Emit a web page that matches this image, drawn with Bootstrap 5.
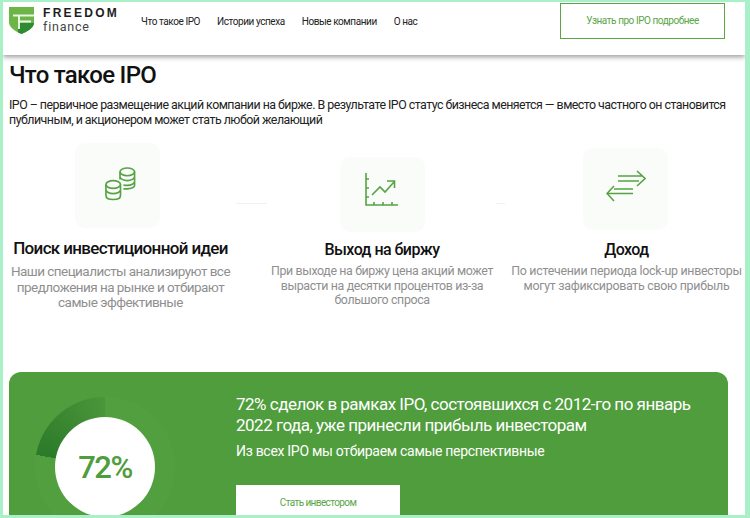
<!DOCTYPE html>
<html lang="ru">
<head>
    <meta charset="UTF-8">
    <meta name="viewport" content="width=device-width, initial-scale=1.0">
    <title>Что такое IPO</title>
    <link href="https://cdn.jsdelivr.net/npm/bootstrap@5.3.0/dist/css/bootstrap.min.css" rel="stylesheet">
    <style>
        html, body { height: 100%; overflow: hidden; }
        body { font-family: Roboto, "Liberation Sans", sans-serif; color: #1c1c1c; background: #fff; }
        .page-frame { height: 518px; overflow: hidden; border-style: solid; border-color: #a9efc8; border-width: 2px 5px 3px 3px; }
        .top-bar { height: 53px; padding: 0 0 0 6px; box-shadow: 0 2px 5px rgba(0,0,0,.4); }
        .logo-link { align-self: flex-start; margin-top: 5px; }
        .logo-word { line-height: 1; margin-left: 9px; color: #1d1d1d; }
        .logo-word b { display: block; font-family: "Liberation Sans", sans-serif; font-size: 12px; font-weight: 700; letter-spacing: 2.300px; }
        .logo-word span { display: block; font-size: 12.500px; letter-spacing: .8px; color: #444; margin-top: 2px; }
        .menu-link { font-size: 10px; color: #222; padding: 0; text-decoration: none; letter-spacing: -.43px; }
        .top-menu { margin-left: 22px; gap: 17px; align-self: flex-start; margin-top: 12px; }
        .more-btn { width: 165px; height: 36px; margin: 1px 20px 0 auto; align-self: flex-start; border: 1px solid #5aa647; border-radius: 0; font-size: 10px; color: #5aa647; line-height: 24px; padding: 5px 0; letter-spacing: -.45px; }
        .intro { padding: 5px 6px 0 6px; }
        .intro h1 { font-size: 24px; font-weight: 500; margin: 0 0 7px; line-height: 30px; color: #111; letter-spacing: -.7px; }
        .intro p { font-size: 12.400px; line-height: 15px; margin: 0; color: #222; letter-spacing: -.52px; }
        .steps { margin-top: 16px; padding-left: 6px; align-items: flex-start; }
        .step-col { text-align: center; }
        .step-one { width: 223px; }
        .step-two { width: 224px; }
        .step-three { width: 233px; }
        .icon-tile { width: 85px; height: 85px; border-radius: 10px; background: #fafcf9; margin: 0 auto; }
        .step-one .icon-tile { margin-left: 66px; padding: 0 0 4px 6px; }
        .step-two .icon-tile { margin-top: 14px; height: 75px; padding-bottom: 9px; }
        .step-three .icon-tile { margin-top: 5px; height: 82px; margin-left: 73px; padding-bottom: 6px; }
        .step-col h3 { font-size: 16px; font-weight: 500; color: #111; margin: 8px 0 4px; line-height: 20px; letter-spacing: -.55px; }
        .step-one h3 { font-size: 17px; margin: 9px 0 5px; line-height: 22px; letter-spacing: -.64px; }
        .step-three h3 { margin: 10px 0 4px; }
        .step-col p { font-size: 12.400px; line-height: 14.500px; color: #8f8f8f; margin: 0; letter-spacing: -.38px; }
        .step-three p { letter-spacing: -.28px; }
        .step-one p { font-size: 13.500px; line-height: 15.500px; letter-spacing: -.55px; }
        .step-dash { height: 1px; background: #eef1ee; margin-top: 60px; }
        .dash-one { width: 31px; margin-left: 4px; margin-right: 3px; }
        .dash-two { width: 9px; margin-left: 2px; margin-right: 5px; }
        .promo { margin: 61px 17px 0 6px; height: 180px; background: #4f9d3c; border-radius: 12px; color: #fff; }
        .ring-box { width: 227px; padding: 25px 0 0 26px; flex-shrink: 0; }
        .ring-outer { width: 140px; height: 140px; border-radius: 50%; background: conic-gradient(#519f3e 0 280deg, #2b7a2a 280deg, #4a9639 360deg); }
        .ring-inner { width: 100px; height: 100px; border-radius: 50%; background: #fff; color: #4f9d3c; font-size: 31px; font-weight: 500; margin-top: 20px; padding-top: 4px; letter-spacing: -1.500px; }
        .promo-text { padding-top: 22px; }
        .promo-text h2 { font-size: 17px; font-weight: 400; line-height: 21px; margin: 0 0 5px; width: 470px; letter-spacing: -.5px; }
        .promo-text p { font-size: 14px; line-height: 20px; margin: 0 0 24px; letter-spacing: -.3px; }
        .invest-btn { width: 164px; height: 40px; background: #fff; border: 0; border-radius: 0; color: #5aa647; font-size: 10px; padding: 0 0 4px; letter-spacing: -.6px; }
    </style>
</head>
<body>
<div class="page-frame">
    <!-- Header -->
    <header class="top-bar d-flex align-items-center">
        <a href="#" class="logo-link d-flex align-items-center text-decoration-none">
            <svg width="25" height="27" viewBox="0 0 25 27">
                <path d="M0 0H25V15C25 21 18 24.500 12.500 27C7 24.500 0 21 0 15Z" fill="#6cb547"/>
                <path d="M12.500 27C18 24.500 25 21 25 16H9V25.500Z" fill="#2f8a33"/>
                <path d="M4 7.500H25V9.500H11V13.500H22V15.500H11V22H9V9.500H4Z" fill="#fff" opacity=".85"/>
            </svg>
            <div class="logo-word"><b>FREEDOM</b><span>finance</span></div>
        </a>
        <nav class="nav top-menu">
            <a class="menu-link" href="#">Что такое IPO</a>
            <a class="menu-link" href="#">Истории успеха</a>
            <a class="menu-link" href="#">Новые компании</a>
            <a class="menu-link" href="#">О нас</a>
        </nav>
        <a href="#" class="btn more-btn">Узнать про IPO подробнее</a>
    </header>

    <!-- Intro -->
    <section class="intro">
        <h1>Что такое IPO</h1>
        <p>IPO – первичное размещение акций компании на бирже. В результате IPO статус бизнеса меняется — вместо частного он становится публичным, и акционером может стать любой желающий</p>
    </section>

    <!-- Steps -->
    <section class="steps d-flex">
        <div class="step-col step-one">
            <div class="icon-tile d-flex align-items-center justify-content-center">
                <svg width="33" height="35" viewBox="0 0 34 36" fill="none" stroke="#55a343" stroke-width="1.700">
                    <ellipse cx="24" cy="6" rx="7.500" ry="4"/>
                    <path d="M16.500 6V14M31.500 6V20C31.500 22 28 23.500 24 23.500H20M16.500 11C16.500 13 20 15 24 15S31.500 13 31.500 11M20 19.500C21 19.800 22.500 20 24 20C28 20 31.500 18 31.500 16"/>
                    <ellipse cx="9.500" cy="19" rx="7.500" ry="4"/>
                    <path d="M2 19V30C2 33 5.500 34.500 9.500 34.500S17 33 17 30V19M2 24.500C2 26.500 5.500 28.500 9.500 28.500S17 26.500 17 24.500"/>
                </svg>
            </div>
            <h3>Поиск инвестиционной идеи</h3>
            <p>Наши специалисты анализируют все предложения на рынке и отбирают самые эффективные</p>
        </div>
        <div class="step-dash dash-one"></div>
        <div class="step-col step-two">
            <div class="icon-tile d-flex align-items-center justify-content-center">
                <svg width="34" height="34" viewBox="0 0 34 34" fill="none" stroke="#55a343" stroke-width="1.600">
                    <path d="M1 0V32H33M1 6H4M1 15H4M1 24H4M9 32V29M18 32V29M27 32V29"/>
                    <path d="M7 22L15 14L20 19L29 9M22 8H29.500V15"/>
                </svg>
            </div>
            <h3>Выход на биржу</h3>
            <p>При выходе на биржу цена акций может вырасти на десятки процентов из-за большого спроса</p>
        </div>
        <div class="step-dash dash-two"></div>
        <div class="step-col step-three">
            <div class="icon-tile d-flex align-items-center justify-content-center">
                <svg width="40" height="32" viewBox="0 0 40 32" fill="none" stroke="#55a343" stroke-width="1.600">
                    <path d="M12 6H36M12 11H33M31 1L39 8.500L31 16"/>
                    <path d="M27 19H8M27 23.500H2M8 16L1 23.500L8 31"/>
                </svg>
            </div>
            <h3>Доход</h3>
            <p>По истечении периода lock-up инвесторы могут зафиксировать свою прибыль</p>
        </div>
    </section>

    <!-- Promo -->
    <section class="promo d-flex">
        <div class="ring-box">
            <div class="ring-outer d-flex justify-content-center">
                <div class="ring-inner d-flex align-items-center justify-content-center">72%</div>
            </div>
        </div>
        <div class="promo-text">
            <h2>72% сделок в рамках IPO, состоявшихся с 2012-го по январь 2022 года, уже принесли прибыль инвесторам</h2>
            <p>Из всех IPO мы отбираем самые перспективные</p>
            <a href="#" class="btn invest-btn d-flex align-items-center justify-content-center">Стать инвестором</a>
        </div>
    </section>
</div>
<script src="https://cdn.jsdelivr.net/npm/bootstrap@5.3.0/dist/js/bootstrap.bundle.min.js"></script>
</body>
</html>
